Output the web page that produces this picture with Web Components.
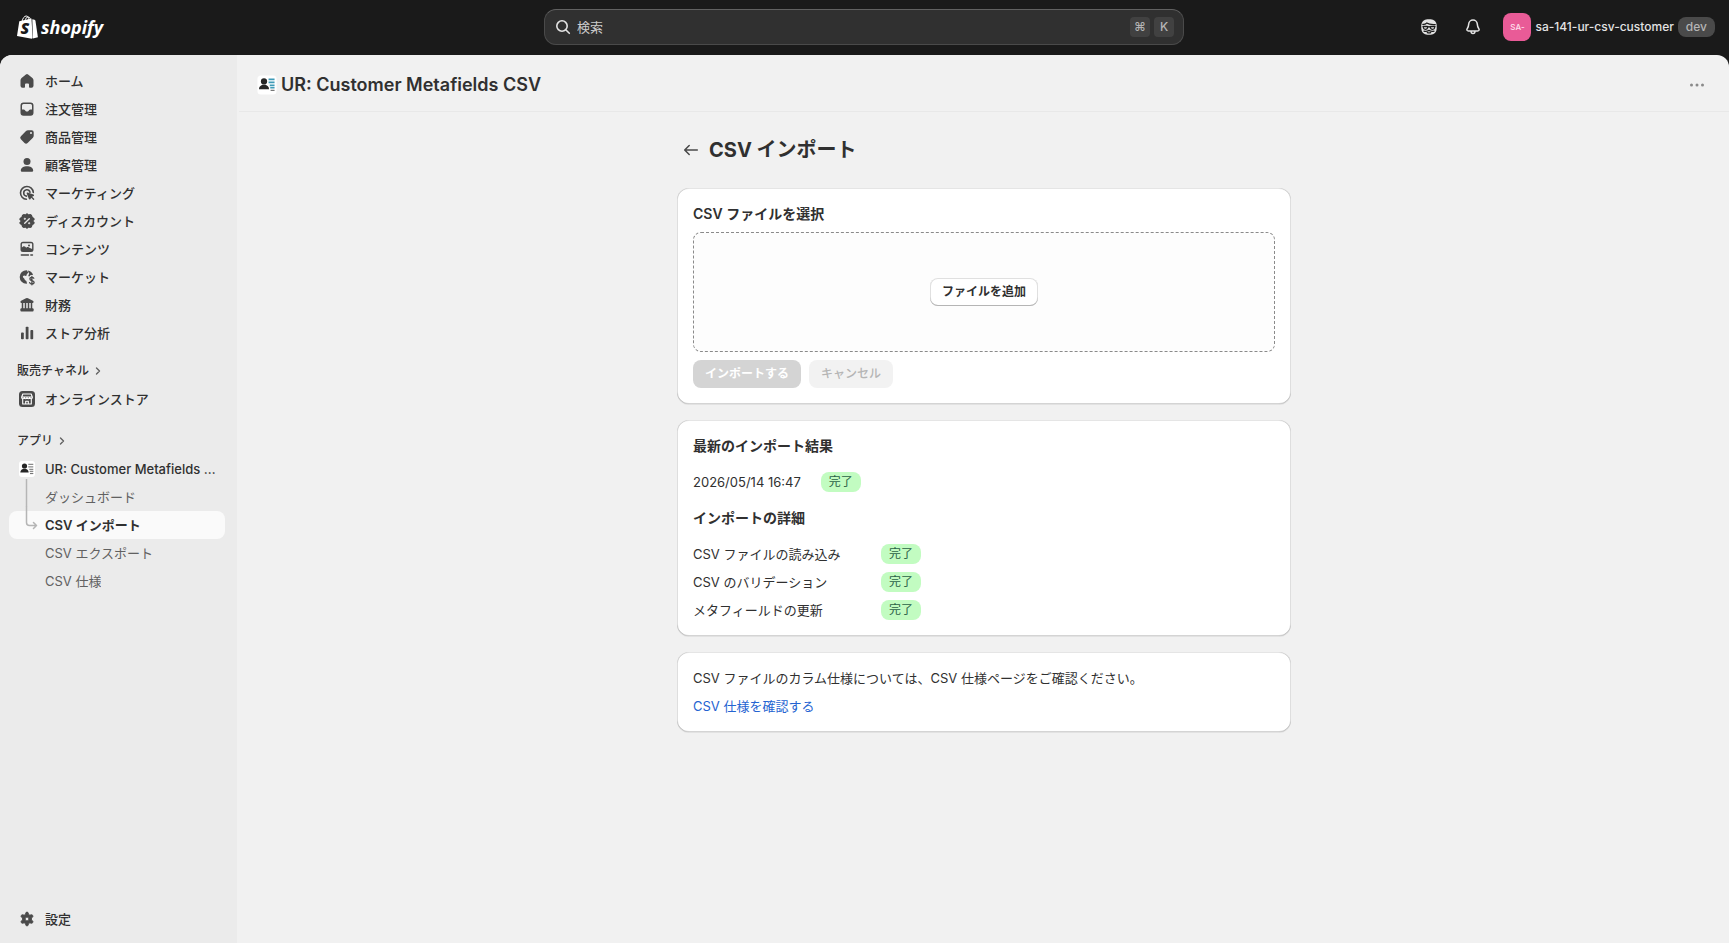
<!DOCTYPE html>
<html lang="ja">
<head>
<meta charset="utf-8">
<meta name="viewport" content="width=device-width, initial-scale=1">
<title>UR: Customer Metafields CSV</title>
<style>
    body {
        margin: 0;
        background-color: #1a1a1a;
        color: #303030;
        font-family: Inter, "Noto Sans CJK JP", sans-serif;
        font-size: 13px;
        line-height: 20px;
    }
</style>
</head>
<body>
<admin-app></admin-app>

<script>
const ICONS = {
    home: `<path d="M8.9 3.4a1.7 1.7 0 0 1 2.2 0l4.3 3.7c.7.6 1.1 1.500 1.100 2.400v5.200a2 2 0 0 1-2 2h-1.700a.8.8 0 0 1-.8-.8v-2.400a1 1 0 0 0-1-1h-2a1 1 0 0 0-1 1v2.400a.8.8 0 0 1-.8.8h-1.700a2 2 0 0 1-2-2v-5.200c0-.9.400-1.800 1.100-2.400z"/>`,
    orders: `<path fill-rule="evenodd" d="M6.5 3.500h7a3 3 0 0 1 3 3v7.300a3 3 0 0 1-3 3h-7a3 3 0 0 1-3-3v-7.300a3 3 0 0 1 3-3zm0 1.500a1.500 1.500 0 0 0-1.500 1.500v4h1.600c.6 0 1.100.3 1.400.8l.5.8c.2.300.500.400.800.400h1.400c.3 0 .6-.1.800-.4l.5-.8c.3-.5.800-.8 1.400-.8h1.600v-4a1.500 1.500 0 0 0-1.500-1.500z"/>`,
    tag: `<path fill-rule="evenodd" d="M11 3.300h3.700a2 2 0 0 1 2 2v3.400c0 .8-.3 1.500-.8 2l-5.300 5.200a2.200 2.200 0 0 1-3.100 0l-3.600-3.600a2.200 2.200 0 0 1 0-3.100l5.100-5.100c.5-.5 1.200-.8 2-.8zm3 3.700a1 1 0 1 0 0-2 1 1 0 0 0 0 2z"/>`,
    person: `<circle cx="10" cy="6.500" r="3.500"/><path d="M3.800 15.200c.3-2.600 3-4 6.200-4s5.900 1.400 6.200 4c.1 1-.7 1.600-1.500 1.600h-9.400c-.8 0-1.600-.6-1.500-1.600z"/>`,
    target: `<g fill="none" stroke="currentColor" stroke-width="1.600" stroke-linecap="round"><path d="M16.300 9.500a6.400 6.400 0 1 0-6.900 6.800"/><path d="M13 9.200a3.200 3.200 0 1 0-3.600 3.900"/></g><path d="M9.700 10.500c-.2-.6.300-1.100.9-.9l5.900 2c.7.2.7 1.200.1 1.500l-1.500.7 2 2c.6.600-.3 1.500-.9.900l-2-2-.8 1.500c-.3.600-1.300.5-1.500-.1z"/>`,
    discount: `<path d="M8.700 3.300 10 2l1.300 1.300 2.300-.3 1.300.9.800 2.100 1.700 1.200.300 1.600L16.300 10l1.400 1.300-.4 1.700-1.700 1.100-.8 2.100-1.300.7-2.200-.2L10 18l-1.300-1.300-2.200.2-1.400-.8-.7-2-1.700-1.200-.4-1.500L3.700 10 2.300 8.800l.4-1.700 1.700-1.200.700-2 1.500-.9z"/><g stroke="#ebebeb" stroke-width="1.300" stroke-linecap="round"><path d="M12.300 7.700l-4.600 4.600"/><circle cx="7.800" cy="7.800" r=".4"/><circle cx="12.200" cy="12.200" r=".4"/></g>`,
    content: `<path fill-rule="evenodd" d="M6 2.800h8a2.500 2.500 0 0 1 2.500 2.500v5.200a2.500 2.500 0 0 1-2.500 2.500h-8a2.500 2.500 0 0 1-2.500-2.500v-5.200a2.500 2.500 0 0 1 2.500-2.500zm0 1.400c-.7 0-1.100.4-1.100 1.100v3.200l1.200-.9c.7-.5 1.600-.4 2.200.2l.9.900.6-.4c.7-.4 1.500-.4 2.100.100l3.200 1.500v-4.600c0-.7-.4-1.100-1.100-1.100z"/><circle cx="12" cy="6.400" r="1"/><path d="M4.300 16h7.200M13.800 16h1.700" stroke="currentColor" stroke-width="1.400" stroke-linecap="round"/>`,
    market: `<path d="M9.600 3.200a6.800 6.800 0 0 0-.2 13.600c.5 0 .7-.5.500-.9-.3-.9-.2-1.500-.8-2.200-.5-.6-1.500-.5-1.500-1.500 0-1-1.200-1.200-1.600-2-.4-.9.300-1.500 1.200-1.600.9 0 1.300.5 2 .2.800-.3.100-1.200.8-1.900.5-.5 1.200-.5 1.200-1.300 0-.9-1-1-.9-1.900z"/><path d="M10.800 3.500c2.600.5 4.600 2 5.200 4.300-.7.600-1.500-.2-2.300.3-.8.500-.9 1.700-1.800 1.400-.9-.3-.5-1.500.1-2.200.6-.800-.2-1.100-.4-1.900z"/><path d="M16.800 11.300c-.4-.7-1.100-1-1.900-1-1.200 0-2 .7-2 1.600 0 2.300 4.200 1 4.200 3.300 0 1-.9 1.700-2.200 1.700-1 0-1.800-.4-2.200-1.200M14.900 9.300v8.500" fill="none" stroke="currentColor" stroke-width="1.300" stroke-linecap="round"/>`,
    bank: `<path d="M9 3.300a2 2 0 0 1 2 0l4.900 2.500c1.200.7.800 2.200-.4 2.200h-11c-1.200 0-1.600-1.500-.4-2.200z"/><path d="M5.500 7v7M8.500 7v7M11.500 7v7M14.500 7v7" stroke="currentColor" stroke-width="1.500"/><rect x="3.400" y="13.300" width="13.200" height="3.200" rx="1"/>`,
    bars: `<rect x="4" y="9.500" width="2.800" height="6.700" rx=".8"/><rect x="8.700" y="3.800" width="2.800" height="12.400" rx=".8"/><rect x="13.400" y="7" width="2.800" height="9.200" rx=".8"/>`,
    store: `<rect x="2" y="2" width="16" height="16" rx="3.500"/><g fill="none" stroke="#fff" stroke-width="1.100" stroke-linejoin="round"><path d="M5.800 5h8.400l1.200 3.200c0 2-2.700 2-2.700.2 0 1.700-2.700 1.700-2.700 0 0 1.700-2.700 1.700-2.700 0 0 1.800-2.700 1.800-2.700-.2zM4.800 8h10.400M5.700 9.800v5.200h8.600v-5.200M8.700 15v-2.800h2.600v2.800"/></g>`,
    gear: `<path fill-rule="evenodd" stroke="currentColor" stroke-width=".9" d="M8.700 4.200c.2-1.500 2.400-1.500 2.600 0l.3 1.300 1.300.7 1.200-.4c1.400-.5 2.500 1.400 1.400 2.400l-1 .9v1.800l1 .9c1.100 1 0 2.900-1.400 2.400l-1.200-.4-1.300.7-.3 1.300c-.2 1.500-2.400 1.500-2.600 0l-.3-1.300-1.300-.7-1.200.4c-1.400.5-2.500-1.400-1.400-2.400l1-.9v-1.800l-1-.9c-1.100-1 0-2.900 1.400-2.400l1.200.4 1.300-.7zm1.300 7.700a1.900 1.900 0 1 0 0-3.800 1.900 1.900 0 0 0 0 3.800z"/>`,
    app: `<rect x="2" y="2" width="16" height="16" rx="3" fill="#fff"/><circle cx="7.500" cy="7" r="2.600" fill="#262626"/><path d="M3.300 13.500c0-2.300 1.700-3.700 4.200-3.700s4.200 1.400 4.200 3.700z" fill="#262626"/><path d="M11.300 5.300h5M11.300 7.800h5M12.300 10.300h4M12.700 12.300h3.600" stroke="var(--app-lines, #8a8a8a)" stroke-width="1.300"/><path d="M13 14.500h3.300" stroke="#777" stroke-width="1.200"/>`,
    stem: `<path d="M9.500 -8v28" fill="none" stroke="#b5b5b5" stroke-width="1.500"/>`,
    branch: `<path d="M9.500 -8v15.500a3 3 0 0 0 3 3h7M16.500 7.500l3 3-3 3" fill="none" stroke="#b5b5b5" stroke-width="1.500" stroke-linecap="round" stroke-linejoin="round"/>`,
    search: `<g fill="none" stroke="currentColor" stroke-width="1.600" stroke-linecap="round"><circle cx="9" cy="9" r="5.200"/><path d="M13 13l3.300 3.300"/></g>`,
    bell: `<path d="M10 3a4.300 4.300 0 0 0-4.300 4.100c-.1 2-.5 3.200-1.500 4.600-.8 1.200-.2 2.200 1.200 2.200h9.200c1.400 0 2-1 1.200-2.200-1-1.400-1.400-2.600-1.500-4.600A4.300 4.300 0 0 0 10 3zM8 14.300c0 3 4 3 4 0" fill="none" stroke="currentColor" stroke-width="1.500" stroke-linejoin="round"/>`,
    sidekick: `<rect x="2.300" y="2.300" width="15.400" height="15.400" rx="6"/><g fill="none" stroke="#1a1a1a" stroke-width="1.300" stroke-linecap="round"><path d="M3.800 7.400c1.600.2 2.900-.3 3.900-1.300 1.600 1.200 4.500 1.700 8.500 1.500"/><path d="M4 9.500h4.200c.5 0 .9.300 1.800.3s1.300-.3 1.800-.3h4.200M4.300 10.500c.3 2.300 3.600 2.600 4.300.2M15.700 10.500c-.3 2.300-3.600 2.600-4.300.2"/><path d="M5 14.200c1.500.4 3.500.1 5-.8 1.500.9 3.500 1.200 5 .8M8.300 15.600c1.100.4 2.300.4 3.400 0"/></g>`,
    dots: `<circle cx="4.500" cy="10" r="1.500"/><circle cx="10" cy="10" r="1.500"/><circle cx="15.500" cy="10" r="1.500"/>`,
    back: `<path d="M16.300 10h-12.300M8.200 5.500L3.700 10l4.500 4.500" fill="none" stroke="currentColor" stroke-width="1.500" stroke-linecap="round" stroke-linejoin="round"/>`,
    chevron: `<path d="M7.500 7L10.500 10l-3 3" fill="none" stroke="currentColor" stroke-width="1.400" stroke-linecap="round" stroke-linejoin="round"/>`
};

class UiIcon extends HTMLElement {
    constructor(){
        super();
        this.attachShadow({mode: 'open'});
    }
    connectedCallback(){
        this.shadowRoot.innerHTML = `
        <style>
        :host{
            display: block;
            flex: none;
            width: 20px;
            height: 20px;
        }
        svg{
            display: block;
            width: 100%;
            height: 100%;
            overflow: visible;
            fill: currentColor;
        }
        </style>
        <svg viewBox="0 0 20 20" aria-hidden="true">${ICONS[this.getAttribute('name')]}</svg>
        `;
    }
}

class NavItem extends HTMLElement {
    constructor(){
        super();
        this.attachShadow({mode: 'open'});
    }
    connectedCallback(){
        const icon = this.getAttribute('icon');
        this.shadowRoot.innerHTML = `
        <style>
        :host{
            display: block;
        }
        a{
            display: flex;
            align-items: center;
            gap: 8px;
            height: 28px;
            padding: 0 8px;
            border-radius: 8px;
            color: #303030;
            font-weight: 500;
            text-decoration: none;
        }
        ui-icon,
        .space{
            flex: none;
            width: 20px;
            color: #4a4a4a;
        }
        span{
            overflow: hidden;
            white-space: nowrap;
            text-overflow: ellipsis;
        }
        :host([sub]) a{
            color: #616161;
            font-weight: 400;
        }
        :host([selected]) a{
            background-color: #fafafa;
            color: #303030;
            font-weight: 600;
        }
        </style>
        <a href="#">
            ${icon ? `<ui-icon name="${icon}"></ui-icon>` : '<i class="space"></i>'}
            <span><slot></slot></span>
        </a>
        `;
    }
}

class NavHeading extends HTMLElement {
    constructor(){
        super();
        this.attachShadow({mode: 'open'});
    }
    connectedCallback(){
        this.shadowRoot.innerHTML = `
        <style>
        :host{
            display: block;
        }
        a{
            display: flex;
            align-items: center;
            height: 28px;
            padding: 0 8px;
            color: #303030;
            font-size: 12px;
            font-weight: 500;
            text-decoration: none;
        }
        ui-icon{
            color: #616161;
        }
        </style>
        <a href="#"><slot></slot><ui-icon name="chevron"></ui-icon></a>
        `;
    }
}

class SideNav extends HTMLElement {
    constructor(){
        super();
        this.attachShadow({mode: 'open'});
    }
    connectedCallback(){
        this.shadowRoot.innerHTML = `
        <style>
        :host{
            display: block;
            background-color: #ebebeb;
        }
        nav{
            display: flex;
            flex-direction: column;
            box-sizing: border-box;
            height: 100%;
            padding: 12px 12px 10px 9px;
        }
        .group{
            margin-bottom: 10px;
        }
        .group + .group{
            margin-bottom: 14px;
        }
        .settings{
            margin-top: auto;
        }
        </style>
        <nav>
            <div class="group">
                <nav-item icon="home">ホーム</nav-item>
                <nav-item icon="orders">注文管理</nav-item>
                <nav-item icon="tag">商品管理</nav-item>
                <nav-item icon="person">顧客管理</nav-item>
                <nav-item icon="target">マーケティング</nav-item>
                <nav-item icon="discount">ディスカウント</nav-item>
                <nav-item icon="content">コンテンツ</nav-item>
                <nav-item icon="market">マーケット</nav-item>
                <nav-item icon="bank">財務</nav-item>
                <nav-item icon="bars">ストア分析</nav-item>
            </div>
            <div class="group">
                <nav-heading>販売チャネル</nav-heading>
                <nav-item icon="store">オンラインストア</nav-item>
            </div>
            <div class="group">
                <nav-heading>アプリ</nav-heading>
                <nav-item icon="app">UR: Customer Metafields CSV</nav-item>
                <nav-item icon="stem" sub>ダッシュボード</nav-item>
                <nav-item icon="branch" sub selected>CSV インポート</nav-item>
                <nav-item sub>CSV エクスポート</nav-item>
                <nav-item sub>CSV 仕様</nav-item>
            </div>
            <nav-item class="settings" icon="gear">設定</nav-item>
        </nav>
        `;
    }
}

class TopBar extends HTMLElement {
    constructor(){
        super();
        this.attachShadow({mode: 'open'});
    }
    connectedCallback(){
        this.shadowRoot.innerHTML = `
        <style>
        :host{
            display: grid;
            grid-template-columns: 1fr minmax(200px, 640px) 1fr;
            align-items: center;
            box-sizing: border-box;
            height: 55px;
            padding: 0 1px 1px 0;
            color: #e3e3e3;
        }
        .logo{
            display: flex;
            align-items: center;
            gap: 3px;
            padding-left: 17px;
            color: #fff;
            font: italic 700 18px/24px "Open Sans", sans-serif;
            text-decoration: none;
        }
        .logo svg{
            width: 21px;
            height: 24px;
        }
        .search{
            display: flex;
            align-items: center;
            gap: 4px;
            box-sizing: border-box;
            height: 36px;
            padding: 0 9px 0 8px;
            border: 1px solid #4a4a4a;
            border-top-color: #616161;
            border-radius: 12px;
            background-color: #303030;
        }
        input{
            flex: 1;
            min-width: 0;
            padding: 0;
            border: 0;
            outline: 0;
            background: none;
            color: inherit;
            font: inherit;
        }
        input::placeholder{
            color: #cccccc;
            opacity: 1;
        }
        kbd{
            width: 20px;
            border-radius: 4px;
            background-color: #414141;
            color: #b5b5b5;
            font: 500 12px/20px Inter, "DejaVu Sans", sans-serif;
            text-align: center;
        }
        .actions{
            display: flex;
            align-items: center;
            justify-content: flex-end;
            padding-right: 13px;
        }
        button{
            display: flex;
            align-items: center;
            padding: 0;
            border: 0;
            background: none;
            color: inherit;
            font: inherit;
        }
        .tool{
            justify-content: center;
            width: 44px;
            height: 32px;
        }
        .account{
            gap: 4px;
            margin-left: 8px;
            font-size: 12px;
            font-weight: 500;
        }
        .avatar{
            width: 28px;
            border-radius: 8px;
            background-color: #e95b97;
            color: #ffe0ee;
            font-size: 8px;
            line-height: 28px;
            text-align: center;
        }
        .env{
            padding: 0 8px;
            border-radius: 8px;
            background-color: #4a4a4a;
            color: #b5b5b5;
        }
        </style>
        <a class="logo" href="#">
            <svg viewBox="0 0 21 24" aria-hidden="true">
                <path d="M2.300 6.300l11-2.600 1.200-.2 1.100 19.500-.8.700L0 21z" fill="#fff"/>
                <path d="M15.300 4.200l2.200.6.9.7 2.500 16.800-5 1.300z" fill="#fff"/>
                <path d="M5 6.500c.7-3.300 2.400-5.500 4.200-5.500 1.700 0 2.700 1.700 2.800 4.500M8 6c.4-2.500 1.600-4 3.200-4 1.300 0 2 .9 2.300 2.700" fill="none" stroke="#fff" stroke-width="1"/>
                <text x="3.500" y="19" font-family="Open Sans" font-size="16" font-style="italic" font-weight="800" fill="#1a1a1a">S</text>
            </svg>
            <span>shopify</span>
        </a>
        <label class="search">
            <ui-icon name="search"></ui-icon>
            <input type="text" placeholder="検索" aria-label="検索">
            <kbd>⌘</kbd>
            <kbd>K</kbd>
        </label>
        <div class="actions">
            <button class="tool" aria-label="Sidekick"><ui-icon name="sidekick"></ui-icon></button>
            <button class="tool" aria-label="通知"><ui-icon name="bell"></ui-icon></button>
            <button class="account">
                <span class="avatar">SA-</span>
                <span>sa-141-ur-csv-customer</span>
                <span class="env">dev</span>
            </button>
        </div>
        `;
    }
}

class UiCard extends HTMLElement {
    constructor(){
        super();
        this.attachShadow({mode: 'open'});
    }
    connectedCallback(){
        this.shadowRoot.innerHTML = `
        <style>
        :host{
            display: flex;
            flex-direction: column;
            gap: 8px;
            padding: 16px;
            border-radius: 12px;
            background-color: #fff;
            box-shadow: 0 1px 0 rgba(26, 26, 26, .07),
                inset 1px 0 0 rgba(0, 0, 0, .13),
                inset -1px 0 0 rgba(0, 0, 0, .13),
                inset 0 -1px 0 rgba(0, 0, 0, .17),
                inset 0 1px 0 rgba(204, 204, 204, .5);
        }
        :host([loose]){
            gap: 16px;
        }
        </style>
        <slot></slot>
        `;
    }
}

class UiBadge extends HTMLElement {
    constructor(){
        super();
        this.attachShadow({mode: 'open'});
    }
    connectedCallback(){
        this.shadowRoot.innerHTML = `
        <style>
        :host{
            display: inline-block;
            padding: 0 8px;
            border-radius: 8px;
            background-color: #c2fcc1;
            color: #2b6147;
            font-size: 12px;
            line-height: 20px;
        }
        </style>
        <slot></slot>
        `;
    }
}

class UiButton extends HTMLElement {
    constructor(){
        super();
        this.attachShadow({mode: 'open'});
    }
    connectedCallback(){
        this.shadowRoot.innerHTML = `
        <style>
        :host{
            display: inline-block;
        }
        button{
            display: block;
            height: 28px;
            padding: 0 12px;
            border: 0;
            border-radius: 8px;
            background-color: #fff;
            color: #303030;
            font: inherit;
            font-size: 12px;
            font-weight: 600;
            box-shadow: inset 0 -1px 0 #b5b5b5, inset 0 0 0 1px #e0e0e0;
        }
        button:disabled{
            background-color: #f2f2f2;
            color: #b5b5b5;
            font-weight: 500;
            box-shadow: none;
        }
        :host([primary]) button:disabled{
            background-color: #d4d4d4;
            color: #fff;
            font-weight: 600;
        }
        </style>
        <button ${this.hasAttribute('disabled') ? 'disabled' : ''}><slot></slot></button>
        `;
    }
}

class ImportPage extends HTMLElement {
    constructor(){
        super();
        this.attachShadow({mode: 'open'});
    }
    connectedCallback(){
        this.shadowRoot.innerHTML = `
        <style>
        :host{
            display: flex;
            flex-direction: column;
            gap: 16px;
            box-sizing: border-box;
            max-width: 614px;
            margin: 0 auto;
            padding: 24px 0;
        }
        header{
            display: flex;
            align-items: center;
            gap: 8px;
            height: 28px;
            margin-bottom: 8px;
            padding-left: 4px;
        }
        header a{
            color: #4a4a4a;
        }
        h1, h2, p, dl, dd{
            margin: 0;
        }
        h1{
            font-size: 20px;
            font-weight: 700;
            line-height: 28px;
        }
        h2{
            font-size: 14px;
            font-weight: 600;
            line-height: 20px;
        }
        .dropzone{
            display: flex;
            align-items: center;
            justify-content: center;
            box-sizing: border-box;
            height: 120px;
            border: 1px dashed #8a8a8a;
            border-radius: 8px;
            background-color: #fdfdfd;
        }
        .buttons{
            display: flex;
            gap: 8px;
        }
        .latest{
            display: flex;
            gap: 20px;
        }
        dl{
            display: grid;
            grid-template-columns: 188px 1fr;
            row-gap: 8px;
        }
        dd{
            display: flex;
        }
        p a{
            color: #2463d1;
            text-decoration: none;
        }
        </style>
        <header>
            <a href="#" aria-label="戻る"><ui-icon name="back"></ui-icon></a>
            <h1>CSV インポート</h1>
        </header>
        <ui-card>
            <h2>CSV ファイルを選択</h2>
            <div class="dropzone"><ui-button>ファイルを追加</ui-button></div>
            <div class="buttons">
                <ui-button primary disabled>インポートする</ui-button>
                <ui-button disabled>キャンセル</ui-button>
            </div>
        </ui-card>
        <ui-card loose>
            <h2>最新のインポート結果</h2>
            <div class="latest">
                <span>2026/05/14 16:47</span>
                <ui-badge>完了</ui-badge>
            </div>
            <h2>インポートの詳細</h2>
            <dl>
                <dt>CSV ファイルの読み込み</dt>
                <dd><ui-badge>完了</ui-badge></dd>
                <dt>CSV のバリデーション</dt>
                <dd><ui-badge>完了</ui-badge></dd>
                <dt>メタフィールドの更新</dt>
                <dd><ui-badge>完了</ui-badge></dd>
            </dl>
        </ui-card>
        <ui-card>
            <p>CSV ファイルのカラム仕様については、CSV 仕様ページをご確認ください。</p>
            <p><a href="#">CSV 仕様を確認する</a></p>
        </ui-card>
        `;
    }
}

class AdminApp extends HTMLElement {
    constructor(){
        super();
        this.attachShadow({mode: 'open'});
    }
    connectedCallback(){
        this.shadowRoot.innerHTML = `
        <style>
        :host{
            display: flex;
            flex-direction: column;
            min-height: 100vh;
        }
        .shell{
            flex: 1;
            display: grid;
            grid-template-columns: 237px 1fr;
            column-gap: 2px;
            overflow: hidden;
            border-radius: 12px 12px 0 0;
            background-color: #f1f1f1;
        }
        .title-bar{
            display: flex;
            align-items: center;
            gap: 2px;
            box-sizing: border-box;
            height: 57px;
            padding: 3px 20px 0 16px;
            border-bottom: 1px solid #e8e8e8;
            font-size: 18px;
            font-weight: 600;
        }
        .title-bar > ui-icon{
            width: 24px;
            height: 24px;
            --app-lines: #3f9bb8;
        }
        button{
            margin-left: auto;
            padding: 2px;
            border: 0;
            background: none;
            color: #8a8a8a;
        }
        </style>
        <top-bar></top-bar>
        <div class="shell">
            <side-nav></side-nav>
            <main>
                <div class="title-bar">
                    <ui-icon name="app"></ui-icon>
                    <span>UR: Customer Metafields CSV</span>
                    <button aria-label="その他の操作"><ui-icon name="dots"></ui-icon></button>
                </div>
                <import-page></import-page>
            </main>
        </div>
        `;
    }
}

customElements.define("ui-icon", UiIcon);
customElements.define("nav-item", NavItem);
customElements.define("nav-heading", NavHeading);
customElements.define("side-nav", SideNav);
customElements.define("top-bar", TopBar);
customElements.define("ui-card", UiCard);
customElements.define("ui-badge", UiBadge);
customElements.define("ui-button", UiButton);
customElements.define("import-page", ImportPage);
customElements.define("admin-app", AdminApp);
</script>
</body>
</html>
